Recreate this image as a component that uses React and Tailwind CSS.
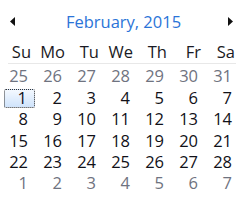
import React from "react";

const prev = [25, 26, 27, 28, 29, 30, 31];
const next = [1, 2, 3, 4, 5, 6, 7];
const days = Array.from({ length: 28 }, (_, i) => i + 1);

export default function App() {
  const cells = [
    ...prev.map((d) => ({ d, muted: true })),
    ...days.map((d) => ({ d, muted: false })),
    ...next.map((d) => ({ d, muted: true })),
  ];
  return (
    <div className="w-[250px] h-[207px] bg-white select-none" style={{ fontFamily: '"Open Sans", "Noto Sans", sans-serif' }}>
      <div className="h-[42px] flex items-center justify-between pl-[10px] pr-[17px]">
        <svg width="5" height="9" viewBox="0 0 5 9"><path d="M5 0 L0 4.5 L5 9 Z" fill="#111" /></svg>
        <span className="text-[16.5px] text-[#2b74d8] leading-none mt-[2px] ml-[4px]">February, 2015</span>
        <svg width="5" height="9" viewBox="0 0 5 9"><path d="M0 0 L5 4.5 L0 9 Z" fill="#111" /></svg>
      </div>
      <div className="pl-[4px]">
        <div className="grid grid-cols-[repeat(7,34px)] h-[20px] items-center">
          {["Su", "Mo", "Tu", "We", "Th", "Fr", "Sa"].map((n) => (
            <div key={n} className="text-right pr-[7px] text-[16.5px] leading-none text-[#1a1a24]">{n}</div>
          ))}
        </div>
        <div className="ml-[4px] w-[228px] h-px bg-[#e8e8e8] mt-[1px] mb-[2px]" />
        <div className="grid grid-cols-[repeat(7,34px)] auto-rows-[21.4px]">
          {cells.map((c, i) => (
            <div key={i} className="flex items-center">
              <div
                className={
                  "w-[31px] h-[19px] flex items-center justify-end pr-[7px] text-[16.5px] leading-none " +
                  (c.muted ? "text-[#6f7380] " : "text-[#111118] ") +
                  (!c.muted && c.d === 1 ? "border border-dotted border-[#333] rounded-[2px] bg-gradient-to-b from-[#f4f9ff] to-[#cfe3fb]" : "")
                }
              >
                {c.d}
              </div>
            </div>
          ))}
        </div>
      </div>
    </div>
  );
}
